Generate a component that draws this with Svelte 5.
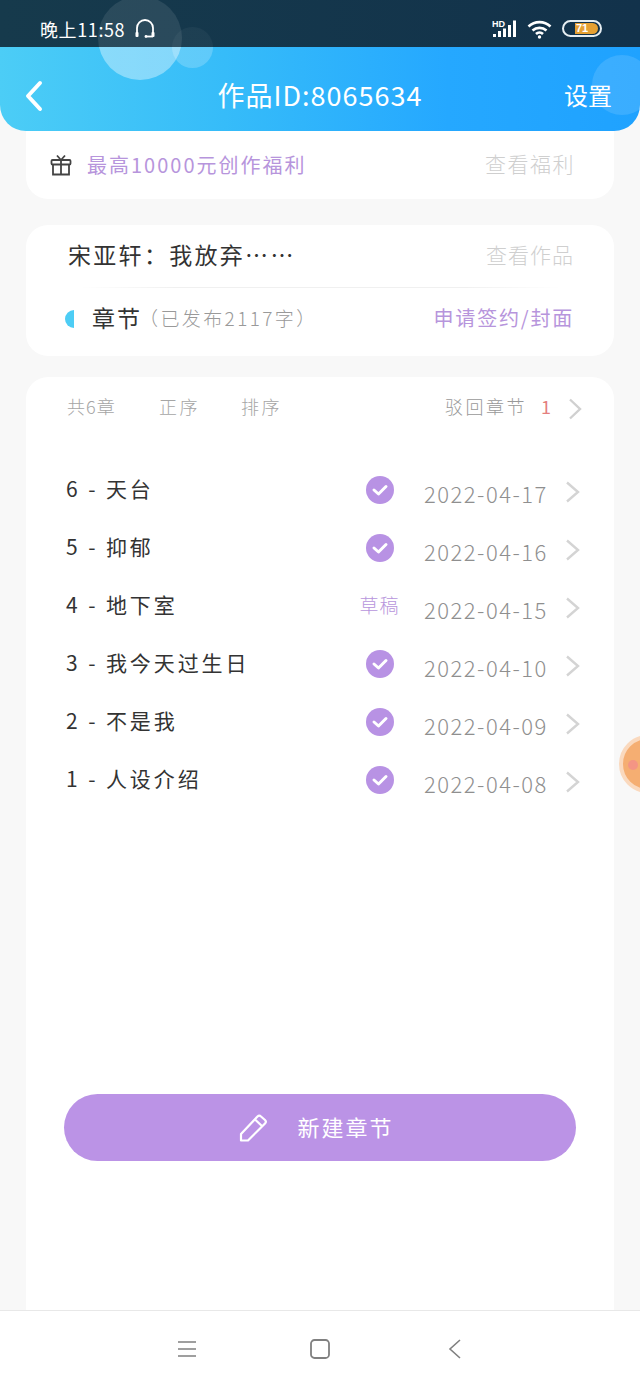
<script>
  const chapters = [
    { title: '6 - 天台', date: '2022-04-17', done: true },
    { title: '5 - 抑郁', date: '2022-04-16', done: true },
    { title: '4 - 地下室', date: '2022-04-15', done: false },
    { title: '3 - 我今天过生日', date: '2022-04-10', done: true },
    { title: '2 - 不是我', date: '2022-04-09', done: true },
    { title: '1 - 人设介绍', date: '2022-04-08', done: true }
  ];
</script>

<div class="page">
  <div class="top">
    <div class="status">
      <div class="status-left">
        <span class="time">晚上11:58</span>
        <svg width="22" height="20" viewBox="0 0 22 20" fill="none" stroke="#fff" stroke-width="1.8" aria-hidden="true">
          <path d="M3 15V9a8 8 0 0 1 16 0v6" />
          <rect x="1.5" y="13" width="3" height="5" rx="1" fill="#fff" stroke="none" />
          <rect x="17.5" y="13" width="3" height="5" rx="1" fill="#fff" stroke="none" />
          <path d="M19 17.5h-6" />
          <circle cx="12" cy="17.5" r="1.4" fill="#fff" stroke="none" />
        </svg>
      </div>
      <div class="status-right">
        <svg width="25" height="18" viewBox="0 0 25 18" fill="#fff" aria-hidden="true">
          <text x="0" y="7" class="hd">HD</text>
          <rect x="1" y="14" width="3" height="3" />
          <rect x="6" y="11" width="3" height="6" />
          <rect x="11" y="8.500" width="3" height="8.500" />
          <rect x="16" y="5" width="3" height="12" />
          <rect x="21" y="0.500" width="3" height="16.500" />
        </svg>
        <svg width="25" height="20" viewBox="0 0 25 20" fill="none" stroke="#fff" stroke-width="2.6" aria-hidden="true">
          <path d="M1.5 7.5a16 16 0 0 1 22 0" />
          <path d="M5.5 11.5a10.500 10.500 0 0 1 14 0" />
          <path d="M9 15a5 5 0 0 1 7 0" />
          <circle cx="12.500" cy="18" r="1.700" fill="#fff" stroke="none" />
        </svg>
        <div class="battery"><div class="battery-fill"><span>71</span></div></div>
      </div>
    </div>
    <header class="bar">
      <svg class="back" width="18" height="32" viewBox="0 0 18 32" fill="none" stroke="#fff" stroke-width="4" stroke-linecap="round" stroke-linejoin="round" aria-hidden="true">
        <path d="M15 3 3 16l12 13" />
      </svg>
      <h1>作品ID:8065634</h1>
      <span class="settings">设置</span>
    </header>
    <i class="bubble b1"></i>
    <i class="bubble b2"></i>
    <i class="bubble b3"></i>
  </div>

  <main>
    <section class="card welfare">
      <svg width="22" height="22" viewBox="0 0 22 22" fill="none" stroke="#444" stroke-width="1.800" aria-hidden="true">
        <rect x="1.500" y="6" width="19" height="4.500" rx="1" />
        <path d="M3 10.500V20.500H19V10.500M11 6v14.500" />
        <path d="M7 1.500 11 6l4-4.500" />
      </svg>
      <span class="welfare-text">最高10000元创作福利</span>
      <span class="link">查看福利</span>
    </section>

    <section class="card work">
      <div class="work-top">
        <span class="work-title">宋亚轩：我放弃……</span>
        <span class="link">查看作品</span>
      </div>
      <div class="divider"></div>
      <div class="work-bottom">
        <i class="half"></i>
        <span class="section-name">章节</span>
        <span class="count">（已发布2117字）</span>
        <span class="apply">申请签约/封面</span>
      </div>
    </section>

    <section class="card list">
      <div class="list-head">
        <span class="total">共6章</span>
        <span class="order first">正序</span>
        <span class="order">排序</span>
        <span class="rejected">驳回章节</span>
        <span class="reject-count">1</span>
        <svg class="chev-head" width="16" height="24" viewBox="0 0 16 24" fill="none" stroke="#d0d0d0" stroke-width="2.400" aria-hidden="true">
          <path d="M3 2.500 13 12 3 21.500" />
        </svg>
      </div>

      <ul>
        {#each chapters as c}
          <li>
            <span class="name">{c.title}</span>
            <span class="state">
              {#if c.done}
                <svg width="28" height="28" viewBox="0 0 28 28" aria-hidden="true">
                  <circle cx="14" cy="14" r="14" fill="#b892e4" />
                  <path d="M8 14l4.500 4L20 10.500" fill="none" stroke="#fff" stroke-width="3" stroke-linecap="round" stroke-linejoin="round" />
                </svg>
              {:else}
                <span class="draft">草稿</span>
              {/if}
            </span>
            <span class="date">{c.date}</span>
            <svg class="chev" width="16" height="24" viewBox="0 0 16 24" fill="none" stroke="#d4d4d4" stroke-width="2.400" aria-hidden="true">
              <path d="M2 2.500 13 12 2 21.500" />
            </svg>
          </li>
        {/each}
      </ul>

      <button class="create">
        <svg width="30" height="28" viewBox="0 0 30 28" fill="none" stroke="#fff" stroke-width="2.200" stroke-linejoin="round" aria-hidden="true">
          <path d="M2 26.500V20L18.500 2.500a2.500 2.500 0 0 1 3.500 0l4 3.500a2.500 2.500 0 0 1 0 3.500L9 26.500Z" />
          <path d="M16 5.500 23.500 12.500" />
        </svg>
        <span>新建章节</span>
      </button>
    </section>
  </main>

  <nav>
    <svg width="20" height="20" viewBox="0 0 20 20" fill="none" stroke="#808080" stroke-width="1.600" aria-hidden="true">
      <path d="M1 3h18M1 10h18M1 17h18" />
    </svg>
    <svg width="20" height="20" viewBox="0 0 20 20" fill="none" stroke="#808080" stroke-width="1.800" aria-hidden="true">
      <rect x="1" y="1" width="18" height="18" rx="3.500" />
    </svg>
    <svg width="20" height="20" viewBox="0 0 20 20" fill="none" stroke="#808080" stroke-width="1.600" aria-hidden="true">
      <path d="M17 1 7 10l10 9" />
    </svg>
  </nav>

  <div class="float"><i></i></div>
</div>

<style>
  :global(body) {
    margin: 0;
    background: #f8f8f8;
  }
  .page {
    position: relative;
    display: flex;
    flex-direction: column;
    width: 640px;
    height: 1387px;
    overflow: hidden;
    background: #f8f8f8;
    font-family: "Noto Sans CJK SC", "Noto Sans", sans-serif;
    font-weight: 300;
  }
  .top {
    position: relative;
    z-index: 2;
    flex: none;
    height: 131px;
    overflow: hidden;
  }
  .status {
    display: flex;
    align-items: center;
    justify-content: space-between;
    height: 47px;
    padding: 10px 38px 0 40px;
    box-sizing: border-box;
    background: linear-gradient(90deg, #163a4c, #12324b);
    color: #fff;
  }
  .status-left {
    display: flex;
    align-items: center;
    gap: 9px;
  }
  .time {
    font-size: 18px;
    line-height: 20px;
    font-weight: 400;
    letter-spacing: .6px;
  }
  .status-right {
    display: flex;
    align-items: center;
    gap: 10px;
  }
  .hd {
    font: 700 9px "Liberation Sans", sans-serif;
  }
  .battery {
    width: 40px;
    height: 17px;
    box-sizing: border-box;
    padding: 1px 2px;
    border: 2px solid #e6eef2;
    border-radius: 9px;
    display: flex;
    justify-content: flex-end;
  }
  .battery-fill {
    width: 23px;
    border-radius: 0 6px 6px 0;
    background: #e5a032;
    color: #fff;
    display: flex;
  }
  .battery-fill span {
    font: 700 11px/11px "Liberation Sans", sans-serif;
    padding-left: 1px;
  }
  .bar {
    position: relative;
    display: flex;
    align-items: center;
    justify-content: center;
    height: 84px;
    border-radius: 0 0 26px 26px;
    background: linear-gradient(90deg, #4ccdf6 0%, #36bcf9 35%, #25a8ff 70%, #1fa2ff 100%);
    color: #fff;
  }
  .back {
    position: absolute;
    left: 25px;
    top: 33px;
  }
  h1 {
    margin: 0;
    font-size: 27px;
    font-weight: 400;
    line-height: 36px;
    letter-spacing: 1px;
    padding-top: 12px;
  }
  .settings {
    position: absolute;
    right: 28px;
    top: 31px;
    font-size: 24px;
    line-height: 34px;
    font-weight: 400;
  }
  .bubble {
    position: absolute;
    border-radius: 50%;
  }
  .b1 {
    left: 98px;
    top: -4px;
    width: 84px;
    height: 84px;
    background: linear-gradient(180deg, rgba(255,255,255,.09) 0 61%, rgba(255,255,255,.38) 61% 100%);
  }
  .b2 {
    left: 172px;
    top: 27px;
    width: 41px;
    height: 41px;
    background: linear-gradient(180deg, rgba(255,255,255,.04) 0 49%, rgba(255,255,255,.2) 49% 100%);
  }
  .b3 {
    left: 592px;
    top: 55px;
    width: 60px;
    height: 60px;
    background: rgba(255,255,255,.12);
  }

  main {
    flex: 1;
    display: flex;
    flex-direction: column;
    min-height: 0;
    padding: 0 26px;
  }
  .card {
    background: #fff;
    border-radius: 22px;
  }
  .welfare {
    flex: none;
    display: flex;
    align-items: center;
    height: 68px;
    box-sizing: border-box;
    padding: 0 39px 1px 24px;
    border-radius: 0 0 22px 22px;
  }
  .welfare svg {
    margin-top: 1px;
  }
  .welfare-text {
    margin-left: 15px;
    font-size: 20px;
    color: #b795dc;
    font-weight: 400;
    letter-spacing: 2px;
  }
  .link {
    margin-left: auto;
    padding-bottom: 3px;
    font-size: 21px;
    letter-spacing: 1.500px;
    color: #cfcfcf;
  }
  .work-top .link {
    letter-spacing: 1px;
    padding-bottom: 0;
  }
  .work {
    flex: none;
    height: 131px;
    margin-top: 26px;
    box-sizing: border-box;
    padding: 0 40px;
    display: flex;
    flex-direction: column;
  }
  .work-top {
    display: flex;
    align-items: center;
    height: 62px;
    box-sizing: border-box;
    padding: 0 0 4px 2px;
  }
  .work-title {
    font-size: 23px;
    letter-spacing: 2.300px;
    color: #333;
    font-weight: 400;
  }
  .divider {
    height: 1px;
    margin: 0 14px;
    background: linear-gradient(90deg, #fff, #f0f0f0 20%, #f0f0f0 80%, #fff);
  }
  .work-bottom {
    display: flex;
    align-items: center;
    height: 62px;
    box-sizing: border-box;
    padding-bottom: 4px;
  }
  .half {
    flex: none;
    width: 9px;
    height: 18px;
    margin: 4px 0 0 -1px;
    border-radius: 9px 0 0 9px;
    background: #4dcdf5;
  }
  .section-name {
    margin-left: 18px;
    font-size: 23px;
    letter-spacing: 2px;
    color: #333;
    font-weight: 400;
  }
  .count {
    font-size: 19px;
    color: #999;
    letter-spacing: 2.400px;
    margin-left: -3px;
  }
  .apply {
    margin-left: auto;
    font-size: 20px;
    color: #b795dc;
    font-weight: 400;
    letter-spacing: 1.800px;
  }
  .list {
    flex: 1;
    min-height: 0;
    margin-top: 21px;
    border-radius: 22px 22px 0 0;
    display: flex;
    flex-direction: column;
    padding: 0 34px 149px 40px;
    box-sizing: border-box;
  }
  .list-head {
    display: flex;
    align-items: center;
    height: 62px;
    box-sizing: border-box;
    padding-bottom: 4px;
    font-size: 18px;
    color: #a5a5a5;
  }
  .total {
    width: 93px;
    padding-left: 1px;
    box-sizing: border-box;
    letter-spacing: 1px;
  }
  .order {
    width: 82px;
    letter-spacing: 2.500px;
  }
  .rejected {
    margin-left: auto;
    color: #999;
    font-size: 18px;
    letter-spacing: 2.500px;
  }
  .reject-count {
    margin-left: 14px;
    color: #e47f7f;
    width: 26px;
    font-weight: 400;
  }
  .chev-head {
    margin: 6px -3px 0 0;
  }
  ul {
    list-style: none;
    margin: 22px 0 0;
    padding: 0;
  }
  li {
    display: grid;
    grid-template-columns: 1fr 40px 147px 34px;
    align-items: center;
    height: 58px;
    color: #333;
  }
  .name {
    padding-bottom: 4px;
    font-size: 21px;
    letter-spacing: 2.900px;
    font-weight: 400;
  }
  .state {
    display: flex;
    justify-content: center;
    height: 28px;
    align-items: center;
    padding-left: 1px;
  }
  .draft {
    padding-bottom: 4px;
    font-size: 19px;
    letter-spacing: 1px;
    color: #b795dc;
    white-space: nowrap;
  }
  .date {
    margin-left: 25px;
    margin-top: 6px;
    font-size: 22px;
    color: #8f8f8f;
    white-space: nowrap;
    letter-spacing: 1.500px;
  }
  .chev {
    margin: 4px 0 0 19px;
  }
  .create {
    margin: auto -4px 0 -2px;
    width: 512px;
    height: 67px;
    flex: none;
    border: 0;
    border-radius: 34px;
    background: #bb93e6;
    color: #fff;
    font: inherit;
    display: flex;
    align-items: center;
    justify-content: center;
    gap: 28px;
    padding: 0 7px 0 0;
  }
  .create span {
    padding-bottom: 4px;
    font-size: 22px;
    letter-spacing: 2px;
    font-weight: 400;
  }
  nav {
    flex: none;
    height: 77px;
    box-sizing: border-box;
    border-top: 1px solid #e8e8e8;
    background: #fff;
    display: flex;
    align-items: center;
    justify-content: center;
    gap: 113px;
  }
  .float {
    position: absolute;
    left: 619px;
    top: 735px;
    width: 58px;
    height: 58px;
    box-sizing: border-box;
    border-radius: 50%;
    background: #f5ae72;
    border: 4px solid #fad9be;
  }
  .float i {
    position: absolute;
    left: 5px;
    top: 21px;
    width: 10px;
    height: 10px;
    border-radius: 50%;
    background: #f48f88;
    opacity: .8;
  }
</style>
